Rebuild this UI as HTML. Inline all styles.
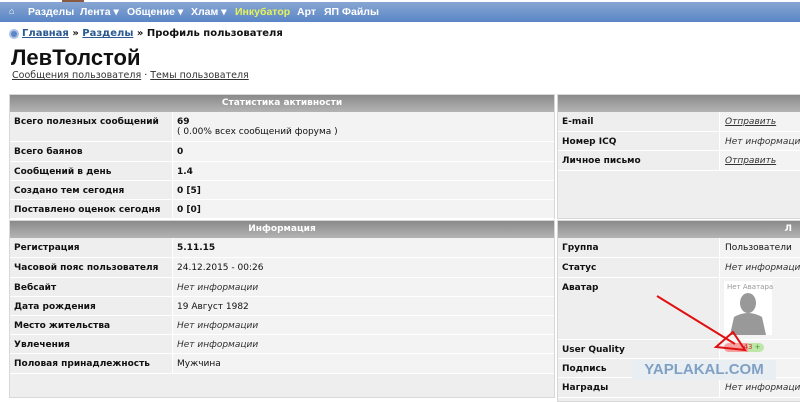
<!DOCTYPE html>
<html><head><meta charset="utf-8"><style>
*{margin:0;padding:0;box-sizing:border-box}
body{width:800px;height:400px;overflow:hidden;background:#fff;font-family:"DejaVu Sans","Liberation Sans",sans-serif;font-size:9px;color:#111;position:relative}
.a{position:absolute;white-space:nowrap}
.nav{left:0;top:2px;width:800px;height:20px;background:linear-gradient(#88a6d2,#5a86c6);}
.nav span{position:absolute;top:4px;color:#fff;font-weight:bold;font-size:10.5px;font-family:"Liberation Sans",sans-serif;white-space:nowrap}
.panel{position:absolute;background:#eeeeee;border:1px solid #d8d8d8}
.hd{position:absolute;left:0;right:0;height:17px;background:linear-gradient(#8a8a8a,#b4b4b4);color:#fff;font-weight:bold;font-size:9px;text-align:center;line-height:17px}
.row{position:absolute;left:0;right:0;border-bottom:1px solid #fff}
.row .l{position:absolute;left:4px;top:5px;font-weight:bold;white-space:nowrap}
.row .v{position:absolute;top:5px;white-space:nowrap}
.row .vb{position:absolute;top:0;bottom:0;border-left:1px solid #fff;background:#f3f3f3}
i{font-style:italic;color:#333}
u{color:#333}
</style></head><body>
<div class="a" style="left:62px;top:0;width:22px;height:3px;background:#8a5a40"></div>
<div class="a nav">
<span style="left:9px;font-size:9px">⌂</span>
<span style="left:28px">Разделы</span>
<span style="left:80px">Лента ▾</span>
<span style="left:127px">Общение ▾</span>
<span style="left:191px">Хлам ▾</span>
<span style="left:235px;color:#e6f35a">Инкубатор</span>
<span style="left:297px">Арт</span>
<span style="left:324px">ЯП Файлы</span>
</div>
<div class="a" style="left:9px;top:29px;width:10px;height:10px;border-radius:50%;background:#5b86c8;border:2px solid #a9c2e6"></div>
<div class="a" style="left:22px;top:28px;font-size:10px;font-weight:bold"><u style="color:#2a5a90">Главная</u> » <u style="color:#2a5a90">Разделы</u> » Профиль пользователя</div>
<div class="a" style="left:11px;top:45px;font-size:22px;font-weight:bold;font-family:'Liberation Sans',sans-serif">ЛевТолстой</div>
<div class="a" style="left:12px;top:70px;font-size:9.5px"><u>Сообщения пользователя</u> · <u>Темы пользователя</u></div>

<div class="panel" style="left:9px;top:94px;width:546px;height:125px">
<div class="hd" style="top:0">Статистика активности</div>
<div class="row" style="top:17px;height:30px"><div class="vb" style="left:162px;right:0"></div><span class="l">Всего полезных сообщений</span><span class="v" style="left:167px"><b>69</b><br>( 0.00% всех сообщений форума )</span></div>
<div class="row" style="top:47px;height:20px"><div class="vb" style="left:162px;right:0"></div><span class="l">Всего баянов</span><span class="v" style="left:167px"><b>0</b></span></div>
<div class="row" style="top:67px;height:19px"><div class="vb" style="left:162px;right:0"></div><span class="l">Сообщений в день</span><span class="v" style="left:167px"><b>1.4</b></span></div>
<div class="row" style="top:86px;height:19px"><div class="vb" style="left:162px;right:0"></div><span class="l">Создано тем сегодня</span><span class="v" style="left:167px"><b>0 [5]</b></span></div>
<div class="row" style="top:105px;height:19px"><div class="vb" style="left:162px;right:0"></div><span class="l">Поставлено оценок сегодня</span><span class="v" style="left:167px"><b>0 [0]</b></span></div>
</div>

<div class="panel" style="left:9px;top:220px;width:546px;height:178px">
<div class="hd" style="top:0">Информация</div>
<div class="row" style="top:17px;height:20px"><div class="vb" style="left:162px;right:0"></div><span class="l">Регистрация</span><span class="v" style="left:167px"><b>5.11.15</b></span></div>
<div class="row" style="top:37px;height:20px"><div class="vb" style="left:162px;right:0"></div><span class="l">Часовой пояс пользователя</span><span class="v" style="left:167px">24.12.2015 - 00:26</span></div>
<div class="row" style="top:57px;height:19px"><div class="vb" style="left:162px;right:0"></div><span class="l">Вебсайт</span><span class="v" style="left:167px"><i>Нет информации</i></span></div>
<div class="row" style="top:76px;height:19px"><div class="vb" style="left:162px;right:0"></div><span class="l">Дата рождения</span><span class="v" style="left:167px">19 Август 1982</span></div>
<div class="row" style="top:95px;height:19px"><div class="vb" style="left:162px;right:0"></div><span class="l">Место жительства</span><span class="v" style="left:167px"><i>Нет информации</i></span></div>
<div class="row" style="top:114px;height:19px"><div class="vb" style="left:162px;right:0"></div><span class="l">Увлечения</span><span class="v" style="left:167px"><i>Нет информации</i></span></div>
<div class="row" style="top:133px;height:20px"><div class="vb" style="left:162px;right:0"></div><span class="l">Половая принадлежность</span><span class="v" style="left:167px">Мужчина</span></div>
</div>

<div class="panel" style="left:557px;top:94px;width:250px;height:125px">
<div class="hd" style="top:0"></div>
<div class="row" style="top:17px;height:20px"><div class="vb" style="left:161px;right:0"></div><span class="l">E-mail</span><span class="v" style="left:167px"><i><u>Отправить</u></i></span></div>
<div class="row" style="top:37px;height:19px"><div class="vb" style="left:161px;right:0"></div><span class="l">Номер ICQ</span><span class="v" style="left:167px"><i>Нет информации</i></span></div>
<div class="row" style="top:56px;height:20px"><div class="vb" style="left:161px;right:0"></div><span class="l">Личное письмо</span><span class="v" style="left:167px"><i><u>Отправить</u></i></span></div>
</div>

<div class="panel" style="left:557px;top:220px;width:250px;height:182px">
<div class="hd" style="top:0;text-align:right;padding-right:14px">Л</div>
<div class="row" style="top:17px;height:20px"><div class="vb" style="left:161px;right:0"></div><span class="l">Группа</span><span class="v" style="left:167px">Пользователи</span></div>
<div class="row" style="top:37px;height:20px"><div class="vb" style="left:161px;right:0"></div><span class="l">Статус</span><span class="v" style="left:167px"><i>Нет информации</i></span></div>
<div class="row" style="top:57px;height:62px"><div class="vb" style="left:161px;right:0"></div><span class="l">Аватар</span></div>
<div class="row" style="top:119px;height:19px"><div class="vb" style="left:161px;right:0"></div><span class="l">User Quality</span></div>
<div class="row" style="top:138px;height:19px"><div class="vb" style="left:161px;right:0"></div><span class="l">Подпись</span></div>
<div class="row" style="top:157px;height:20px"><div class="vb" style="left:161px;right:0"></div><span class="l">Награды</span><span class="v" style="left:167px"><i>Нет информации</i></span></div>
</div>

<div class="a" style="left:724px;top:281px;width:48px;height:54px;background:#fff">
<div class="a" style="left:3px;top:2px;font-size:7px;color:#999">Нет Аватара</div>
<svg class="a" style="left:0;top:10px" width="48" height="44"><ellipse cx="24" cy="12" rx="8" ry="10" fill="#999"/><path d="M6 44 L10 26 Q24 18 38 26 L42 44Z" fill="#999"/></svg>
</div>
<div class="a" style="left:724px;top:343px;width:40px;height:9px;border-radius:5px;background:linear-gradient(90deg,#f6a0a0 60%,#bfe6a8 60%);font-size:7px;color:#c33;padding-left:17px;line-height:9px">-43 <span style="color:#393">+</span></div>
<div class="a" style="left:632px;top:360px;width:144px;height:20px;background:#e9eef3;color:#7fa0c4;font-weight:bold;font-size:15px;line-height:20px;text-align:center;font-family:'Liberation Sans',sans-serif">YAPLAKAL.COM</div>
<svg class="a" style="left:0;top:0" width="800" height="400"><line x1="657" y1="296" x2="735" y2="344" stroke="#e01010" stroke-width="2"/><polygon points="745,350 716,347 733,332" fill="none" stroke="#e01010" stroke-width="2"/></svg>
</body></html>
